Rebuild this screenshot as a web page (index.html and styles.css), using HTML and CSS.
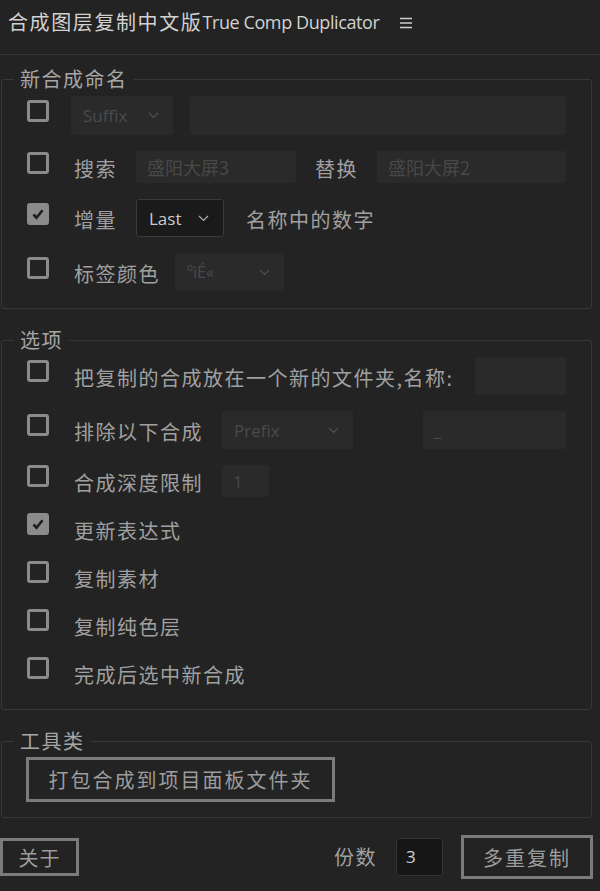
FILE: index.html
```html
<!DOCTYPE html>
<html lang="zh-CN">
<head>
    <meta charset="UTF-8">
    <meta name="viewport" content="width=device-width, initial-scale=1.0">
    <title>合成图层复制中文版 True Comp Duplicator</title>
    <link rel="stylesheet" href="styles.css">
</head>
<body>
    <header class="titlebar">
        <span class="title">合成图层复制中文版</span><span class="title-en">True Comp Duplicator</span>
        <svg class="menu" width="14" height="12" viewBox="0 0 14 12">
            <path d="M1 1.5h12M1 6h12M1 10.5h12" stroke="#cfcfcf" stroke-width="1.4" fill="none"/>
        </svg>
    </header>

    <main class="panels">
        <fieldset class="panel">
            <legend>新合成命名</legend>
            <div class="rows rows-naming">
                <div class="row h39">
                    <span class="check"></span>
                    <div class="select off w102 pull">Suffix<svg class="chev" width="11" height="7" viewBox="0 0 11 7"><path d="M1 1l4.5 4.5L10 1" stroke="#505050" stroke-width="1.2" fill="none"/></svg></div>
                    <div class="field off grow"></div>
                </div>
                <div class="row h32">
                    <span class="check"></span>
                    <span class="label">搜索</span>
                    <div class="field off w160"><span class="hint">盛阳大屏3</span></div>
                    <span class="label">替换</span>
                    <div class="field off grow"><span class="hint">盛阳大屏2</span></div>
                </div>
                <div class="row h38">
                    <span class="check on"><svg width="16" height="16" viewBox="0 0 16 16"><path d="M3.5 8.5l3 3.2 6-7.5" stroke="#1e1e1e" stroke-width="2.6" fill="none"/></svg></span>
                    <span class="label">增量</span>
                    <div class="select live w88">Last<svg class="chev" width="11" height="7" viewBox="0 0 11 7"><path d="M1 1l4.5 4.5L10 1" stroke="#b0b0b0" stroke-width="1.2" fill="none"/></svg></div>
                    <span class="label push">名称中的数字</span>
                </div>
                <div class="row h38">
                    <span class="check"></span>
                    <span class="label">标签颜色</span>
                    <div class="select off w109 garbled">ºìÉ«<svg class="chev" width="11" height="7" viewBox="0 0 11 7"><path d="M1 1l4.5 4.5L10 1" stroke="#505050" stroke-width="1.2" fill="none"/></svg></div>
                </div>
            </div>
        </fieldset>

        <fieldset class="panel">
            <legend>选项</legend>
            <div class="rows rows-options">
                <div class="row h38">
                    <span class="check"></span>
                    <span class="label">把复制的合成放在一个新的文件夹,名称:</span>
                    <div class="field off w91 end"></div>
                </div>
                <div class="row h38">
                    <span class="check"></span>
                    <span class="label">排除以下合成</span>
                    <div class="select off w131">Prefix<svg class="chev" width="11" height="7" viewBox="0 0 11 7"><path d="M1 1l4.5 4.5L10 1" stroke="#505050" stroke-width="1.2" fill="none"/></svg></div>
                    <div class="field off w143 end"><span class="hint latin">_</span></div>
                </div>
                <div class="row h32">
                    <span class="check"></span>
                    <span class="label">合成深度限制</span>
                    <div class="field off w47"><span class="hint latin">1</span></div>
                </div>
                <div class="row h32">
                    <span class="check on"><svg width="16" height="16" viewBox="0 0 16 16"><path d="M3.5 8.5l3 3.2 6-7.5" stroke="#1e1e1e" stroke-width="2.6" fill="none"/></svg></span>
                    <span class="label">更新表达式</span>
                </div>
                <div class="row h32">
                    <span class="check"></span>
                    <span class="label">复制素材</span>
                </div>
                <div class="row h32">
                    <span class="check"></span>
                    <span class="label">复制纯色层</span>
                </div>
                <div class="row h32">
                    <span class="check"></span>
                    <span class="label">完成后选中新合成</span>
                </div>
            </div>
        </fieldset>

        <fieldset class="panel">
            <legend>工具类</legend>
            <div class="rows rows-tools">
                <button type="button" class="btn btn-pack">打包合成到项目面板文件夹</button>
            </div>
        </fieldset>
    </main>

    <footer class="bottombar">
        <button type="button" class="btn btn-about">关于</button>
        <span class="label copies">份数</span>
        <div class="count">3</div>
        <button type="button" class="btn btn-run">多重复制</button>
    </footer>
</body>
</html>
```

FILE: styles.css
```css
body {
    background-color: #232323;
    font-family: "Noto Sans CJK SC", "Noto Sans", sans-serif;
    color: #a0a0a0;
    margin: 0;
    padding: 0;
}
.titlebar {
    height: 55px;
    border-bottom: 1px solid #333333;
    display: flex;
    align-items: flex-start;
    padding: 8px 0 0 8px;
    box-sizing: border-box;
    color: #d2d2d2;
}
.title {
    font-size: 20px;
    line-height: 28px;
    letter-spacing: 1.6px;
}
.title-en {
    font-family: "Open Sans", sans-serif;
    font-size: 18px;
    line-height: 28px;
    letter-spacing: -0.4px;
}
.menu {
    margin: 9px 0 0 20px;
}
.panels {
    margin: 0 8px 0 1px;
}
.panel {
    margin: 12px 0 0 0;
    padding: 0;
    border: 1px solid #383838;
    border-radius: 3px;
}
.panel + .panel {
    margin-top: 19px;
}
legend {
    margin-left: 12px;
    padding: 0 6px;
    font-size: 20px;
    line-height: 24px;
    letter-spacing: 1.5px;
    color: #a6a6a6;
}
.rows {
    display: flex;
    flex-direction: column;
    gap: 16px;
    padding: 5px 25px 17px 25px;
}
.rows-options {
    padding: 5px 25px 20px 25px;
}
.rows-tools {
    padding: 4px 25px 15px 24px;
    align-items: flex-start;
}
.row {
    display: flex;
    align-items: center;
    gap: 19px;
}
.h39 { height: 39px; }
.h38 { height: 38px; }
.h32 { height: 32px; }
.check {
    width: 22px;
    height: 22px;
    box-sizing: border-box;
    border: 3px solid #8b8b8b;
    border-radius: 3px;
    margin-right: 6px;
    margin-bottom: 9px;
    flex: none;
    display: flex;
    align-items: center;
    justify-content: center;
}
.rows-options .check {
    margin-bottom: 10px;
}
.check.on {
    background-color: #8b8b8b;
}
.label {
    font-size: 20px;
    line-height: 28px;
    letter-spacing: 1.5px;
    white-space: nowrap;
    margin-top: 4px;
}
.push {
    margin-left: 3px;
}
.field,
.select {
    height: 100%;
    box-sizing: border-box;
    border-radius: 3px;
    flex: none;
    display: flex;
    align-items: center;
}
.off {
    background-color: #2a2a2a;
    color: #4b4b4b;
}
.grow { flex: 1; }
.end { margin-left: auto; }
.w47 { width: 47px; }
.w88 { width: 88px; }
.w91 { width: 91px; }
.w102 { width: 102px; }
.w109 { width: 109px; }
.w131 { width: 131px; }
.w143 { width: 143px; }
.w160 { width: 160px; }
.pull {
    margin-left: -3px;
    margin-right: -2px;
}
.select {
    font-family: "Open Sans", sans-serif;
    font-size: 17px;
    padding: 0 14px 0 12px;
    justify-content: space-between;
}
.select.live {
    background-color: #1a1a1a;
    border: 1px solid #3a3a3a;
    color: #cbcbcb;
}
.garbled {
    font-size: 16px;
    margin-left: -4px;
}
.hint {
    font-size: 18px;
    padding-left: 11px;
    color: #484848;
}
.hint.latin {
    font-family: "Open Sans", sans-serif;
    font-size: 17px;
}
.btn {
    background-color: #232323;
    border: 3px solid #7b7b7b;
    color: #9c9c9c;
    font-family: "Noto Sans CJK SC", sans-serif;
    font-size: 20px;
    letter-spacing: 2px;
    padding: 0;
    cursor: pointer;
}
.btn-pack {
    width: 309px;
    height: 45px;
}
.bottombar {
    display: flex;
    align-items: center;
    margin-top: 17px;
    padding-right: 7px;
    height: 44px;
}
.btn-about {
    width: 79px;
    height: 38px;
    letter-spacing: 1px;
}
.copies {
    margin-left: auto;
    margin-right: 19px;
    margin-top: 0;
}
.count {
    width: 47px;
    height: 38px;
    box-sizing: border-box;
    background-color: #161616;
    border: 1px solid #333333;
    border-radius: 3px;
    color: #d0d0d0;
    font-family: "Open Sans", sans-serif;
    font-size: 17px;
    line-height: 36px;
    padding-left: 9px;
    margin-right: 18px;
}
.btn-run {
    width: 132px;
    height: 44px;
}
```
